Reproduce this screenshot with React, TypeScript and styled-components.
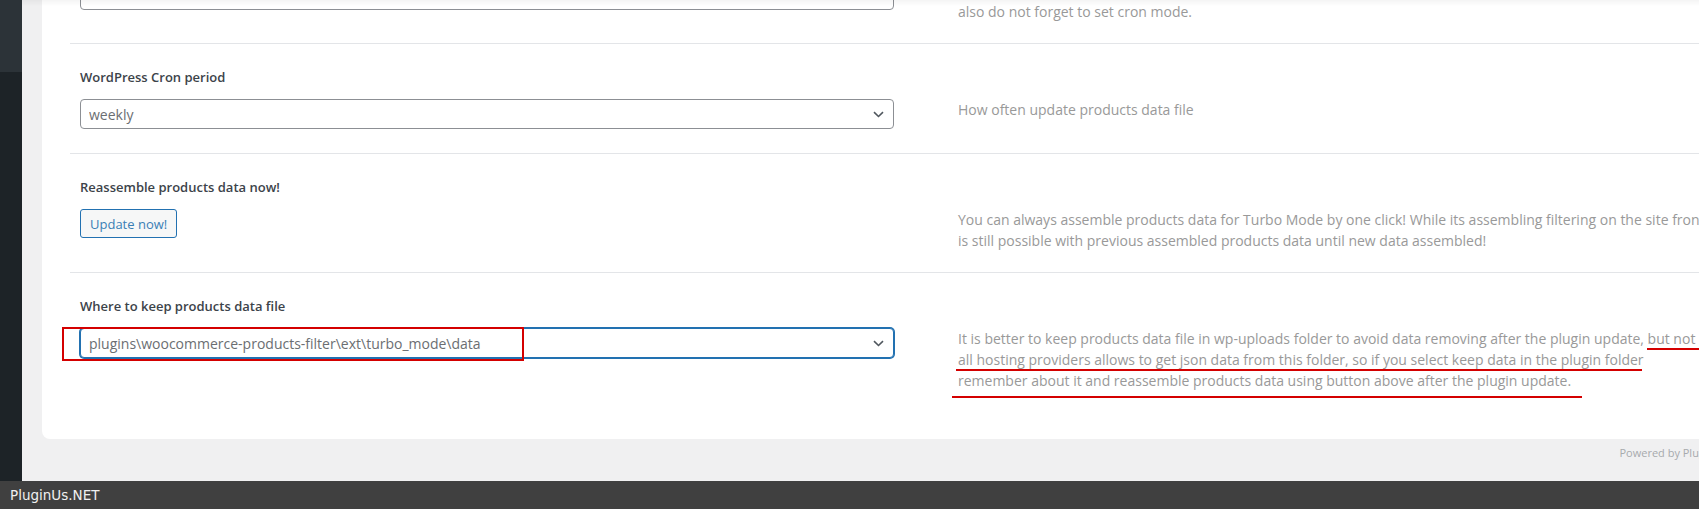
import React from "react";
import styled, { createGlobalStyle } from "styled-components";

const GlobalStyle = createGlobalStyle`
  html, body {
    margin: 0;
    padding: 0;
    overflow: hidden;
    background: #f0f0f1;
  }
  body {
    font-family: "Open Sans", "Noto Sans", sans-serif;
  }
  * { box-sizing: border-box; }
`;

const Page = styled.div`
  width: 1771px;
  height: 509px;
  display: flex;
  flex-direction: column;
`;

const Workspace = styled.div`
  flex: 1;
  min-height: 0;
  display: flex;
  overflow: hidden;
`;

const Sidebar = styled.aside`
  width: 22px;
  flex: none;
  background: #1d2327;
  display: flex;
  flex-direction: column;
`;

const SidebarActive = styled.div`
  height: 72px;
  background: #2c3338;
`;

const Main = styled.main`
  flex: 1;
  min-width: 0;
  padding: 0 20px;
  display: flex;
  flex-direction: column;
`;

const Card = styled.section`
  background: #fff;
  margin-top: -75px;
  padding: 0 28px 27px;
  border-radius: 0 0 8px 8px;
`;

const Row = styled.div<{ $first?: boolean }>`
  display: grid;
  grid-template-columns: 814px 748px;
  grid-template-rows: 20px auto;
  column-gap: 64px;
  row-gap: 12px;
  padding: 23px 10px 24px;
  border-top: ${(p) => (p.$first ? "none" : "1px solid #e3e5e8")};
`;

const Label = styled.div`
  grid-column: 1;
  grid-row: 1;
  font-size: 13px;
  line-height: 20px;
  font-weight: 600;
  color: #3c434a;
`;

const Control = styled.div`
  grid-column: 1;
  grid-row: 2;
  position: relative;
  align-self: start;
`;

const Description = styled.div`
  grid-column: 2;
  grid-row: 2;
  position: relative;
  font-size: 14px;
  line-height: 21px;
  color: #999;
  margin-bottom: -3px;
`;

const SelectWrap = styled.div`
  position: relative;
  width: 814px;
`;

const fieldBase = `
  width: 100%;
  height: 30px;
  margin: 0;
  font-family: "Open Sans", "Noto Sans", sans-serif;
  font-size: 14px;
  color: #6b6e72;
  background: #fff;
  border-radius: 4px;
  outline: none;
`;

const TextInput = styled.input`
  ${fieldBase}
  display: block;
  padding: 0 8px;
  border: 1px solid #8c8f94;
`;

const Select = styled.select<{ $focused?: boolean }>`
  ${fieldBase}
  appearance: none;
  -webkit-appearance: none;
  padding: 0 24px 0 8px;
  border: 1px solid ${(p) => (p.$focused ? "#2271b1" : "#8c8f94")};
  box-shadow: ${(p) => (p.$focused ? "0 0 0 1px #2271b1" : "none")};
`;

const Chevron = styled.svg`
  position: absolute;
  right: 10px;
  top: 12px;
  width: 11px;
  height: 7px;
  pointer-events: none;
`;

const Button = styled.button`
  height: 29px;
  padding: 0 9px;
  font-family: "Open Sans", "Noto Sans", sans-serif;
  font-size: 13px;
  color: #3a7fb5;
  background: #f6f7f7;
  border: 1px solid #2271b1;
  border-radius: 3px;
`;

const RedBox = styled.div`
  position: absolute;
  left: -18px;
  top: -1px;
  width: 462px;
  height: 34px;
  border: 2px solid #d40000;
  pointer-events: none;
`;

const RedLine = styled.div`
  position: absolute;
  height: 2px;
  background: #d40000;
  pointer-events: none;
`;

const Footer = styled.footer`
  padding-top: 7px;
  text-align: right;
  font-size: 11px;
  line-height: 14px;
  color: #a7aaad;
`;

const BottomBar = styled.div`
  height: 28px;
  flex: none;
  background: #404040;
  color: #f0f0f0;
  font-family: "DejaVu Sans", Verdana, sans-serif;
  font-size: 13.5px;
  display: flex;
  align-items: center;
  padding-left: 10px;
`;

const TopShade = styled.div`
  position: fixed;
  top: 0;
  left: 22px;
  right: 0;
  height: 6px;
  background: linear-gradient(rgba(0, 0, 0, 0.045), rgba(0, 0, 0, 0));
  pointer-events: none;
`;

const ChevronIcon = () => (
  <Chevron viewBox="0 0 11 7" fill="none">
    <path d="M1 1.2 L5.5 5.5 L10 1.2" stroke="#50575e" strokeWidth="1.6" />
  </Chevron>
);

type SelProps = { value: string; options: string[]; focused?: boolean; children?: React.ReactNode };

const SelectField = ({ value, options, focused, children }: SelProps) => (
  <SelectWrap>
    <Select $focused={focused} defaultValue={value}>
      {options.map((o) => (
        <option key={o} value={o}>
          {o}
        </option>
      ))}
    </Select>
    <ChevronIcon />
    {children}
  </SelectWrap>
);

export default function App() {
  return (
    <>
      <GlobalStyle />
      <Page>
        <Workspace>
          <Sidebar>
            <SidebarActive />
          </Sidebar>
          <Main>
            <Card>
              <Row $first>
                <Label>Cron key</Label>
                <Control>
                  <TextInput type="text" defaultValue="" />
                </Control>
                <Description>
                  Use WordPress cron to reassemble products data file automatically, and
                  <br />
                  also do not forget to set cron mode.
                </Description>
              </Row>
              <Row>
                <Label>WordPress Cron period</Label>
                <Control>
                  <SelectField value="weekly" options={["hourly", "daily", "weekly", "monthly"]} />
                </Control>
                <Description>How often update products data file</Description>
              </Row>
              <Row>
                <Label>Reassemble products data now!</Label>
                <Control>
                  <Button type="button">Update now!</Button>
                </Control>
                <Description>
                  You can always assemble products data for Turbo Mode by one click! While its assembling filtering on the site front
                  is still possible with previous assembled products data until new data assembled!
                </Description>
              </Row>
              <Row>
                <Label>Where to keep products data file</Label>
                <Control>
                  <SelectField
                    focused
                    value="plugins\woocommerce-products-filter\ext\turbo_mode\data"
                    options={[
                      "uploads\\woof_turbo_mode",
                      "plugins\\woocommerce-products-filter\\ext\\turbo_mode\\data",
                    ]}
                  >
                    <RedBox />
                  </SelectField>
                </Control>
                <Description>
                  It is better to keep products data file in wp-uploads folder to avoid data removing after the plugin update, but not
                  all hosting providers allows to get json data from this folder, so if you select keep data in the plugin folder
                  remember about it and reassemble products data using button above after the plugin update.
                  <RedLine style={{ left: 689, top: 20, width: 70 }} />
                  <RedLine style={{ left: -2, top: 41, width: 686 }} />
                  <RedLine style={{ left: -6, top: 68, width: 630 }} />
                </Description>
              </Row>
            </Card>
            <Footer>Powered by PluginUs.NET</Footer>
          </Main>
        </Workspace>
        <BottomBar>PluginUs.NET</BottomBar>
      </Page>
      <TopShade />
    </>
  );
}
